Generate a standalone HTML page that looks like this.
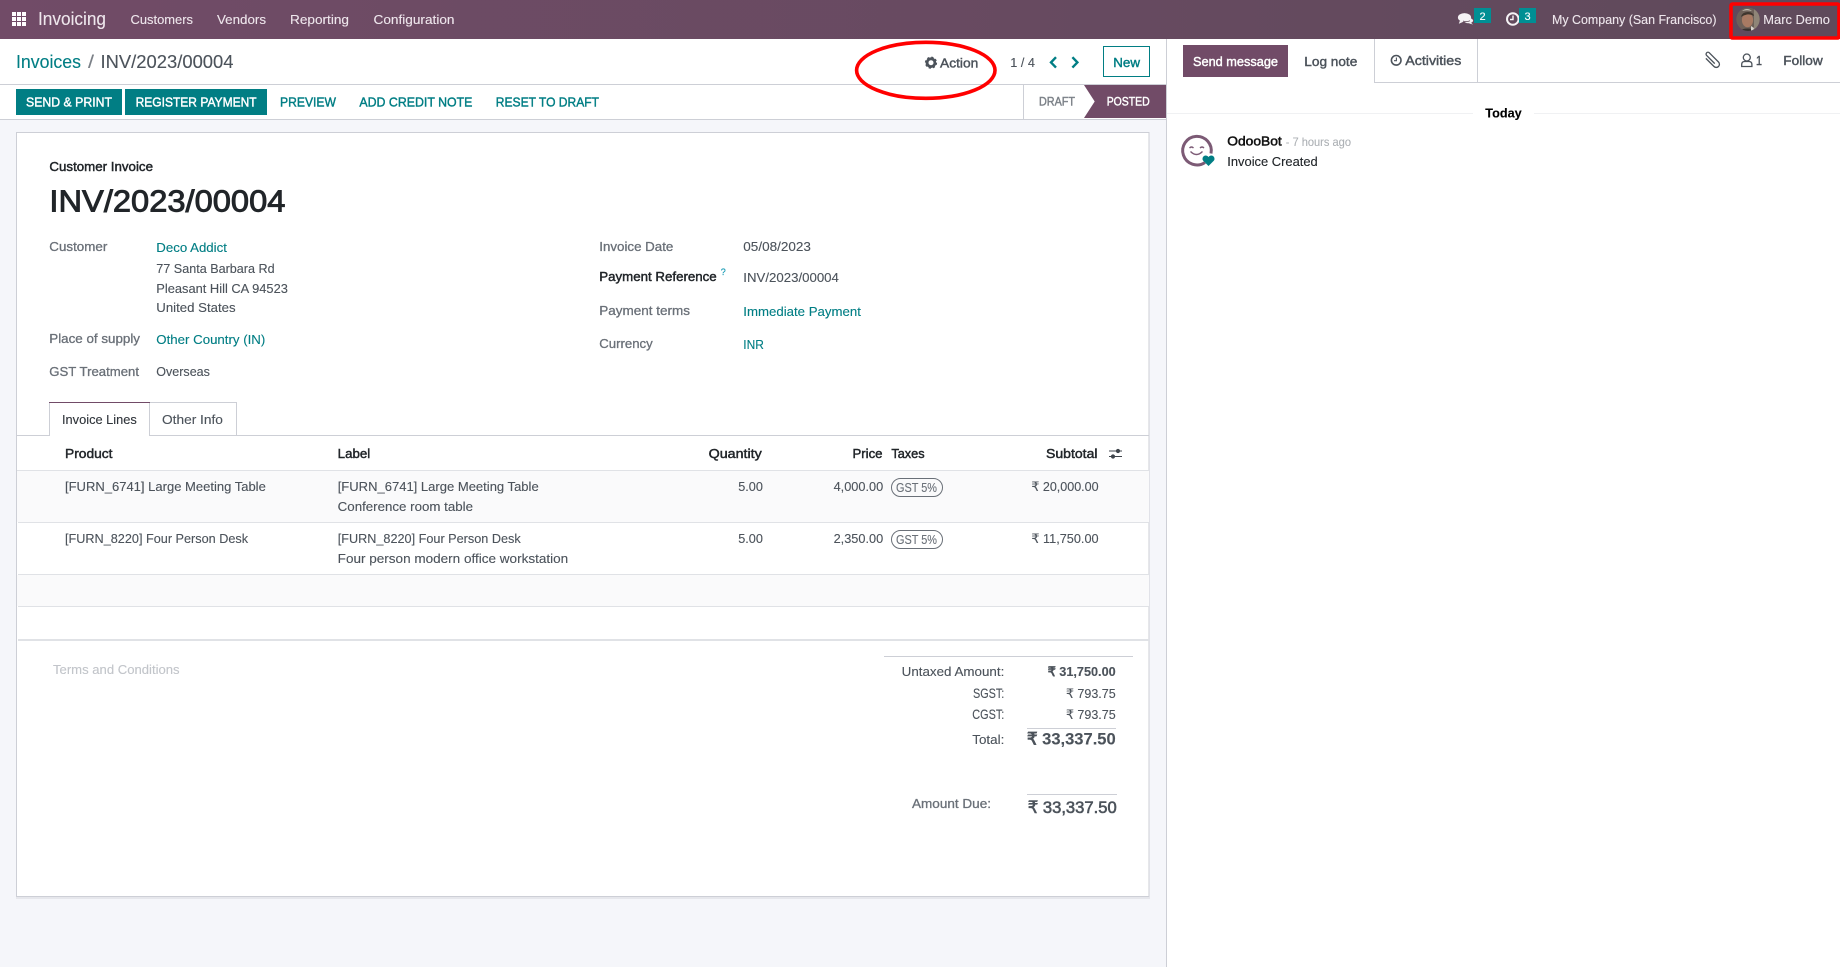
<!DOCTYPE html>
<html lang="en"><head><meta charset="utf-8"><title>INV/2023/00004 - Invoicing</title>
<style>
html,body{margin:0;padding:0;width:1840px;height:967px;overflow:hidden;background:#fff}
svg{display:block}
text{font-family:"Liberation Sans",Arial,sans-serif;font-size:13px;fill:currentColor;stroke:currentColor;stroke-width:.12;color:#4c535b;white-space:pre}
.n{color:#eee6ec}.t{color:#017e84}.l{color:#6a7078;stroke-width:.3}.d{color:#212529;stroke-width:.45}.m{stroke-width:.42}.w{color:#fff}
</style></head><body>
<svg width="1840" height="967" viewBox="0 0 1840 967" xmlns="http://www.w3.org/2000/svg">
<defs>
<linearGradient id="nav" x1="0" x2="1" y1="0" y2="0"><stop offset="0" stop-color="#714b67"/><stop offset="1" stop-color="#5f4a5b"/></linearGradient>
<clipPath id="av"><circle cx="1748" cy="19.3" r="11.7"/></clipPath>
</defs>
<!-- backgrounds -->
<rect width="1840" height="967" fill="#fff"/>
<rect y="120" width="1166" height="847" fill="#f5f6fa"/>
<rect x="0" y="39" width="1166" height="81" fill="#fff"/>
<rect y="84" width="1166" height="1" fill="#cdcfd6"/>
<rect y="119" width="1166" height="1" fill="#cdcfd6"/>
<rect x="1166" y="39" width="1" height="928" fill="#cdcfd6"/>
<!-- navbar -->
<rect width="1840" height="39" fill="url(#nav)"/>
<g fill="#fff"><rect x="12" y="12" width="4" height="4"/><rect x="17" y="12" width="4" height="4"/><rect x="22" y="12" width="4" height="4"/><rect x="12" y="17" width="4" height="4"/><rect x="17" y="17" width="4" height="4"/><rect x="22" y="17" width="4" height="4"/><rect x="12" y="22" width="4" height="4"/><rect x="17" y="22" width="4" height="4"/><rect x="22" y="22" width="4" height="4"/></g>
<text class="n" x="38" y="25" style="font-size:18px" textLength="68" lengthAdjust="spacingAndGlyphs">Invoicing</text>
<text class="n" x="130.5" y="24" textLength="62.5" lengthAdjust="spacingAndGlyphs">Customers</text>
<text class="n" x="217" y="24" textLength="49" lengthAdjust="spacingAndGlyphs">Vendors</text>
<text class="n" x="290" y="24" textLength="59" lengthAdjust="spacingAndGlyphs">Reporting</text>
<text class="n" x="373.5" y="24" textLength="81" lengthAdjust="spacingAndGlyphs">Configuration</text>
<!-- chat icon -->
<g fill="#f5f2f5"><ellipse cx="1464.5" cy="17.5" rx="6.6" ry="4.4"/><path d="M1460 20.5l-1.2 3.2 4.6-2z"/><ellipse cx="1468.5" cy="20.6" rx="4.6" ry="2.6"/><path d="M1470.5 22.5l2.6 2-4-1z"/></g>
<path d="M1463 21q3 1.5 7-.3" fill="none" stroke="#65505f" stroke-width=".8"/>
<rect x="1474" y="8" width="17" height="15" fill="#008f94"/><text x="1479.5" y="20" class="w" style="font-size:11px">2</text>
<circle cx="1512.8" cy="19" r="5.8" fill="none" stroke="#f5f2f5" stroke-width="2"/><path d="M1513 15.5v4h-3" fill="none" stroke="#f5f2f5" stroke-width="1.4"/>
<rect x="1519" y="8" width="17" height="15" fill="#008f94"/><text x="1524.5" y="20" class="w" style="font-size:11px">3</text>
<text class="n" x="1552" y="24" textLength="164.5" lengthAdjust="spacingAndGlyphs">My Company (San Francisco)</text>
<g clip-path="url(#av)"><rect x="1735" y="7" width="26" height="25" fill="#6d6058"/><rect x="1754" y="7" width="7" height="25" fill="#8f8578"/><ellipse cx="1747.5" cy="20" rx="5.6" ry="7.2" fill="#a87a63"/><path d="M1741 17q1-5 7-5 5 0 6 4-4-2-7-1.500-3 .5-6 2.500z" fill="#3f362e"/><path d="M1742 11q5-4 10 0-5-1.500-10 0z" fill="#c9c2b4"/><path d="M1737 32q10-7 22 0z" fill="#37312f"/><path d="M1751 26l3 2-1 4h-2z" fill="#d8d4ce"/></g>
<text class="n" x="1763.3" y="24" textLength="66.7" lengthAdjust="spacingAndGlyphs">Marc Demo</text>
<rect x="1731" y="4" width="108" height="34" rx="1.500" fill="none" stroke="#f00" stroke-width="3.6"/>
<!-- control panel -->
<text class="t" x="16" y="68" style="font-size:18.5px" textLength="65" lengthAdjust="spacingAndGlyphs">Invoices</text>
<text x="88" y="68" style="font-size:18.5px;color:#7b8087" textLength="6" lengthAdjust="spacingAndGlyphs">/</text>
<text x="100.5" y="68" style="font-size:18.5px" textLength="133" lengthAdjust="spacingAndGlyphs">INV/2023/00004</text>
<g transform="translate(931,62.7)"><circle r="3.9" fill="none" stroke="#4c535b" stroke-width="2.8"/><circle r="5.2" fill="none" stroke="#4c535b" stroke-width="1.8" stroke-dasharray="2.1 2"/></g>
<text class="m" x="940" y="67.3" textLength="38.3" lengthAdjust="spacingAndGlyphs">Action</text>
<text x="1010.3" y="67" textLength="24.7" lengthAdjust="spacingAndGlyphs">1 / 4</text>
<path d="M1056 57.2l-5 5.2 5 5.2M1072.4 57.2l5 5.2-5 5.2" fill="none" stroke="#017e84" stroke-width="2.4"/>
<rect x="1103.5" y="46.5" width="46" height="30" fill="#fff" stroke="#017e84"/>
<text class="t m" x="1113.3" y="67" textLength="26.7" lengthAdjust="spacingAndGlyphs">New</text>
<!-- buttons -->
<rect x="16" y="89" width="106" height="26" fill="#017e84"/><rect x="125" y="89" width="142" height="26" fill="#017e84"/>
<text class="w m" x="26" y="106.6" textLength="86" lengthAdjust="spacingAndGlyphs">SEND &amp; PRINT</text>
<text class="w m" x="135.6" y="106.6" textLength="121" lengthAdjust="spacingAndGlyphs">REGISTER PAYMENT</text>
<text class="t m" x="280" y="106.6" textLength="56" lengthAdjust="spacingAndGlyphs">PREVIEW</text>
<text class="t m" x="359.4" y="106.6" textLength="113" lengthAdjust="spacingAndGlyphs">ADD CREDIT NOTE</text>
<text class="t m" x="495.8" y="106.6" textLength="103.2" lengthAdjust="spacingAndGlyphs">RESET TO DRAFT</text>
<!-- statusbar -->
<rect x="1023" y="85" width="1" height="34" fill="#cdcfd6"/>
<text class="m" x="1039" y="105.7" style="font-size:12px;color:#7b8087" textLength="36" lengthAdjust="spacingAndGlyphs">DRAFT</text>
<path d="M1084 85H1166V118H1084L1094.7 101.5z" fill="#714b67"/>
<text class="w m" x="1106.7" y="105.7" style="font-size:12px" textLength="43" lengthAdjust="spacingAndGlyphs">POSTED</text>
<ellipse cx="925.8" cy="70.3" rx="69.2" ry="28" fill="none" stroke="#f00" stroke-width="3.6"/>
<!-- sheet -->
<rect x="16" y="897" width="1134" height="2" fill="#e6e7ec"/>
<rect x="16.5" y="132.5" width="1132.5" height="764" fill="#fff" stroke="#cdcfd6"/>
<text class="d" x="49.4" y="171" textLength="103.6" lengthAdjust="spacingAndGlyphs">Customer Invoice</text>
<text x="49.4" y="211.7" style="font-size:31px;color:#212529;stroke-width:.9" textLength="236" lengthAdjust="spacingAndGlyphs">INV/2023/00004</text>
<text class="l" x="49.3" y="251" textLength="58" lengthAdjust="spacingAndGlyphs">Customer</text>
<text class="t" x="156.3" y="252" textLength="70.6" lengthAdjust="spacingAndGlyphs">Deco Addict</text>
<text x="156.3" y="273" textLength="118.3" lengthAdjust="spacingAndGlyphs">77 Santa Barbara Rd</text>
<text x="156.3" y="293" textLength="131.6" lengthAdjust="spacingAndGlyphs">Pleasant Hill CA 94523</text>
<text x="156.3" y="312" textLength="79.3" lengthAdjust="spacingAndGlyphs">United States</text>
<text class="l" x="49.3" y="343" textLength="90.7" lengthAdjust="spacingAndGlyphs">Place of supply</text>
<text class="t" x="156.3" y="344" textLength="109" lengthAdjust="spacingAndGlyphs">Other Country (IN)</text>
<text class="l" x="49.3" y="376" textLength="89.7" lengthAdjust="spacingAndGlyphs">GST Treatment</text>
<text x="156.3" y="376" textLength="53.6" lengthAdjust="spacingAndGlyphs">Overseas</text>
<text class="l" x="599.3" y="251" textLength="74" lengthAdjust="spacingAndGlyphs">Invoice Date</text>
<text x="743.3" y="251" textLength="67.6" lengthAdjust="spacingAndGlyphs">05/08/2023</text>
<text class="d" x="599.3" y="281" textLength="117.4" lengthAdjust="spacingAndGlyphs">Payment Reference</text>
<text x="720.7" y="275" style="font-size:9px;color:#1a9bb5;stroke-width:.2">?</text>
<text x="743.3" y="282" textLength="95.6" lengthAdjust="spacingAndGlyphs">INV/2023/00004</text>
<text class="l" x="599.3" y="315" textLength="90.7" lengthAdjust="spacingAndGlyphs">Payment terms</text>
<text class="t" x="743.3" y="316" textLength="117.6" lengthAdjust="spacingAndGlyphs">Immediate Payment</text>
<text class="l" x="599.3" y="348" textLength="53.4" lengthAdjust="spacingAndGlyphs">Currency</text>
<text class="t" x="743.3" y="349" textLength="20.6" lengthAdjust="spacingAndGlyphs">INR</text>
<!-- tabs -->
<rect x="17" y="435" width="1132" height="1" fill="#cdcfd6"/>
<path d="M236.5 435.5V402.5H149.5" fill="none" stroke="#cdcfd6"/>
<rect x="49.5" y="402.5" width="100" height="34" fill="#fff"/>
<path d="M49.5 436V402.5M149.5 402.5V436" fill="none" stroke="#cdcfd6"/>
<rect x="49" y="402" width="101" height="1" fill="#714b67"/>
<text x="62" y="424" style="color:#2f343a" textLength="74.8" lengthAdjust="spacingAndGlyphs">Invoice Lines</text>
<text x="162" y="424" textLength="60.9" lengthAdjust="spacingAndGlyphs">Other Info</text>
<!-- table -->
<text class="d" x="65" y="458" textLength="47.5" lengthAdjust="spacingAndGlyphs">Product</text>
<text class="d" x="337.7" y="458" textLength="32.5" lengthAdjust="spacingAndGlyphs">Label</text>
<text class="d" x="708.6" y="458" textLength="53.2" lengthAdjust="spacingAndGlyphs">Quantity</text>
<text class="d" x="852.5" y="458" textLength="30" lengthAdjust="spacingAndGlyphs">Price</text>
<text class="d" x="891.4" y="458" textLength="33.2" lengthAdjust="spacingAndGlyphs">Taxes</text>
<text class="d" x="1046" y="458" textLength="51.5" lengthAdjust="spacingAndGlyphs">Subtotal</text>
<g fill="none" stroke="#3f454c" stroke-width="1.1"><path d="M1109 451h13M1109 456.500h13"/></g><circle cx="1118" cy="451" r="2.1" fill="#3f454c"/><circle cx="1113" cy="456.500" r="2.1" fill="#3f454c"/>
<rect x="17" y="471" width="1132" height="51" fill="#fafafb"/>
<rect x="17" y="575" width="1132" height="31" fill="#fafafb"/>
<g fill="#e0e2e6"><rect x="17" y="470" width="1132" height="1"/><rect x="18" y="522" width="1131" height="1"/><rect x="18" y="574" width="1131" height="1"/><rect x="18" y="606" width="1131" height="1"/><rect x="18" y="639" width="1131" height="2"/></g>
<text x="65" y="491" textLength="200.8" lengthAdjust="spacingAndGlyphs">[FURN_6741] Large Meeting Table</text>
<text x="337.7" y="491" textLength="201" lengthAdjust="spacingAndGlyphs">[FURN_6741] Large Meeting Table</text>
<text x="337.7" y="511" textLength="135.3" lengthAdjust="spacingAndGlyphs">Conference room table</text>
<text x="738.2" y="491" textLength="24.7" lengthAdjust="spacingAndGlyphs">5.00</text>
<text x="833.6" y="491" textLength="49.6" lengthAdjust="spacingAndGlyphs">4,000.00</text>
<rect x="891.5" y="478.5" width="51" height="18" rx="9" fill="none" stroke="#6a7078"/>
<text x="896" y="492" textLength="41" lengthAdjust="spacingAndGlyphs" style="color:#6a7078">GST 5%</text>
<text x="1031.4" y="491" textLength="67.2" lengthAdjust="spacingAndGlyphs">₹ 20,000.00</text>
<text x="65" y="543" textLength="183.1" lengthAdjust="spacingAndGlyphs">[FURN_8220] Four Person Desk</text>
<text x="337.7" y="543" textLength="183" lengthAdjust="spacingAndGlyphs">[FURN_8220] Four Person Desk</text>
<text x="337.7" y="563" textLength="230.5" lengthAdjust="spacingAndGlyphs">Four person modern office workstation</text>
<text x="738.2" y="543" textLength="24.7" lengthAdjust="spacingAndGlyphs">5.00</text>
<text x="833.6" y="543" textLength="49.6" lengthAdjust="spacingAndGlyphs">2,350.00</text>
<rect x="891.5" y="530.5" width="51" height="18" rx="9" fill="none" stroke="#6a7078"/>
<text x="896" y="544" textLength="41" lengthAdjust="spacingAndGlyphs" style="color:#6a7078">GST 5%</text>
<text x="1031.4" y="543" textLength="67.2" lengthAdjust="spacingAndGlyphs">₹ 11,750.00</text>
<text x="53" y="674" style="color:#c2c5ca" textLength="126.6" lengthAdjust="spacingAndGlyphs">Terms and Conditions</text>
<!-- totals -->
<rect x="884" y="656" width="249" height="1" fill="#cdcfd6"/>
<text x="901.7" y="676" textLength="102.6" lengthAdjust="spacingAndGlyphs">Untaxed Amount:</text>
<text x="1047.7" y="676" style="font-weight:bold" textLength="68" lengthAdjust="spacingAndGlyphs">₹ 31,750.00</text>
<text x="973" y="697.8" style="font-size:14px" textLength="31.3" lengthAdjust="spacingAndGlyphs">SGST:</text>
<text x="1066" y="697.8" textLength="49.7" lengthAdjust="spacingAndGlyphs">₹ 793.75</text>
<text x="972.3" y="718.8" style="font-size:14px" textLength="32" lengthAdjust="spacingAndGlyphs">CGST:</text>
<text x="1066" y="718.8" textLength="49.7" lengthAdjust="spacingAndGlyphs">₹ 793.75</text>
<rect x="1027" y="728" width="89" height="1" fill="#cdcfd6"/>
<text x="972.3" y="744" textLength="32" lengthAdjust="spacingAndGlyphs">Total:</text>
<text x="1027" y="744.7" style="font-size:17px;font-weight:bold" textLength="88.7" lengthAdjust="spacingAndGlyphs">₹ 33,337.50</text>
<rect x="1027" y="794" width="90" height="1" fill="#cdcfd6"/>
<text class="l" x="912" y="808" textLength="79" lengthAdjust="spacingAndGlyphs">Amount Due:</text>
<text x="1027.7" y="813" style="font-size:17px;stroke-width:.6" textLength="89" lengthAdjust="spacingAndGlyphs">₹ 33,337.50</text>
<!-- chatter -->
<rect x="1183" y="45" width="105" height="32" fill="#714b67"/>
<text class="w m" x="1193" y="66" textLength="85" lengthAdjust="spacingAndGlyphs">Send message</text>
<text class="m" x="1304.3" y="66" textLength="53" lengthAdjust="spacingAndGlyphs">Log note</text>
<path d="M1374.5 39V82.5H1840M1477.5 39V82" fill="none" stroke="#cdcfd6"/>
<circle cx="1396.2" cy="60.3" r="4.8" fill="none" stroke="#4c535b" stroke-width="1.6"/><path d="M1396.4 57.5v3.2h-2.4" fill="none" stroke="#4c535b" stroke-width="1.1"/>
<text class="m" x="1405.3" y="65" textLength="56" lengthAdjust="spacingAndGlyphs">Activities</text>
<path transform="translate(1712 60) rotate(45)" d="M-5.5 3.2H6a3.2 3.2 0 0 0 0-6.4H-7a1.900 1.900 0 0 0 0 3.800H4.500" fill="none" stroke="#4c535b" stroke-width="1.3"/>
<circle cx="1746.8" cy="57.5" r="3.5" fill="none" stroke="#4c535b" stroke-width="1.3"/><path d="M1741.7 66.5v-2q0-3 3-3h4.200q3 0 3 3v2z" fill="none" stroke="#4c535b" stroke-width="1.3"/>
<text class="m" x="1756" y="65" textLength="6" lengthAdjust="spacingAndGlyphs">1</text>
<text class="m" x="1783.3" y="65" textLength="39.4" lengthAdjust="spacingAndGlyphs">Follow</text>
<rect x="1167" y="113" width="306" height="1" fill="#f0f1f3"/><rect x="1534" y="113" width="306" height="1" fill="#f0f1f3"/>
<text x="1485.3" y="117.7" style="color:#000;font-weight:bold" textLength="36.4" lengthAdjust="spacingAndGlyphs">Today</text>
<path d="M1205 162.5a14.3 14.3 0 1 1 6-9" fill="none" stroke="#7c5a75" stroke-width="3"/>
<path d="M1189.5 148q2-2 4 0M1200 148q2-2 4 0M1190.5 151.5q6 6 12 0" fill="none" stroke="#7c5a75" stroke-width="1.4"/>
<path d="M1208.5 166l-5.500-5.500a3.200 3.200 0 0 1 5.500-3.500 3.200 3.200 0 0 1 5.500 3.500z" fill="#017e84"/>
<text x="1227.3" y="145.7" style="color:#111;stroke-width:.5" textLength="54.4" lengthAdjust="spacingAndGlyphs">OdooBot</text>
<text x="1285.7" y="146" style="font-size:12px;color:#adb1b5" textLength="65.3" lengthAdjust="spacingAndGlyphs">- 7 hours ago</text>
<text x="1227.3" y="166" style="color:#212529" textLength="90.4" lengthAdjust="spacingAndGlyphs">Invoice Created</text>
</svg>
</body></html>
